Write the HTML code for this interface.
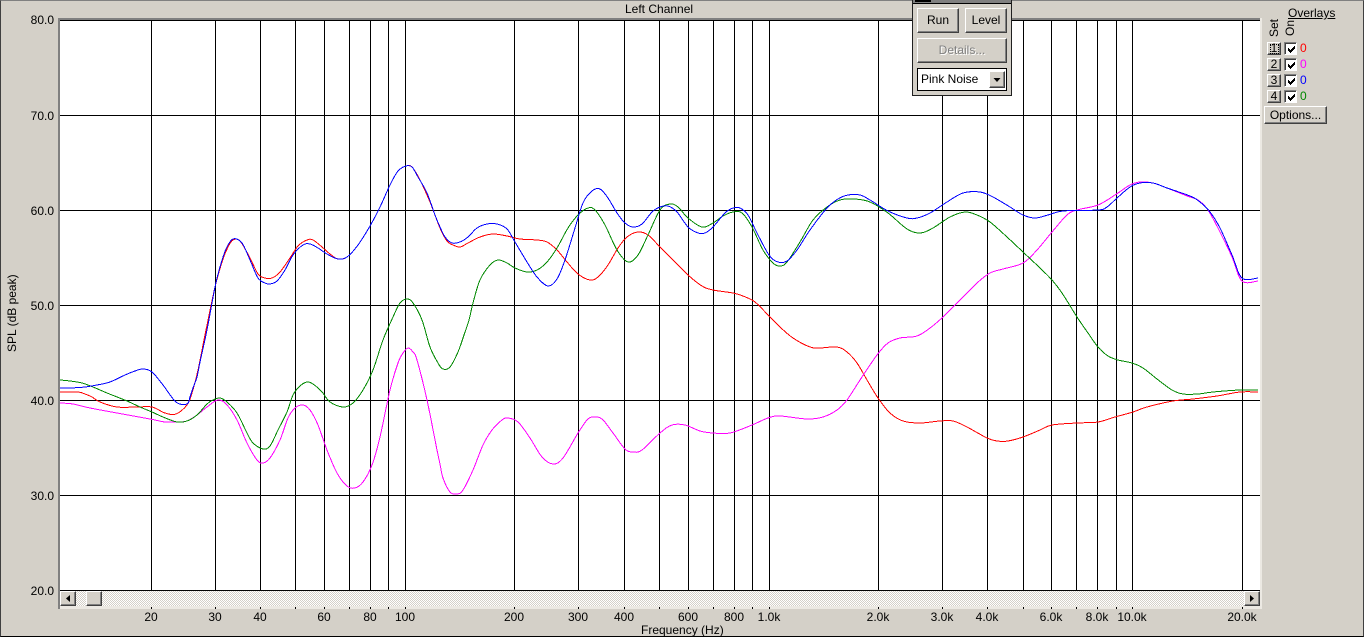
<!DOCTYPE html>
<html><head><meta charset="utf-8"><title>Left Channel</title>
<style>
html,body{margin:0;padding:0}
body{width:1364px;height:637px;position:relative;overflow:hidden;background:#d4d0c8;font:12px/14px "Liberation Sans",Arial,sans-serif;color:#000}
.a{position:absolute;white-space:nowrap}
.yl{position:absolute;right:1310px;white-space:nowrap}
.xl{position:absolute;top:610px;width:60px;margin-left:-30px;text-align:center}
.b{position:absolute;box-sizing:border-box;background:#d4d0c8;border:1px solid;border-color:#fff #404040 #404040 #fff;box-shadow:inset -1px -1px 0 #808080;text-align:center;white-space:nowrap}
.c{position:absolute;box-sizing:border-box;left:1284px;width:13px;height:13px;background:#fff;border:1px solid;border-color:#808080 #fff #fff #808080;box-shadow:inset 1px 1px 0 #404040}
.c svg{position:absolute;left:1px;top:1px}
.z{position:absolute;left:1300px}
</style></head><body>
<div class="a" style="left:0;top:0;width:1362px;height:635px;border:1px solid #404040;border-bottom-color:#000;border-top-color:#808080"></div>
<div class="a" style="left:58px;top:18px;width:1202px;height:2px;background:#808080"></div>
<div class="a" style="left:58px;top:18px;width:2px;height:591px;background:#808080"></div>
<div class="a" style="left:60px;top:20px;width:1200px;height:571px;background:#fff"></div>
<div class="a" style="left:1260px;top:18px;width:2px;height:591px;background:#ece9e3"></div>
<div class="a" style="left:60px;top:606px;width:1202px;height:3px;background:#ece9e3"></div>
<div class="a" style="left:60px;top:591px;width:1200px;height:15px;background:repeating-conic-gradient(#d4d0c8 0 25%,#fff 0 50%) 0 0/2px 2px"></div>

<svg class="a" style="left:0;top:0" width="1364" height="637" viewBox="0 0 1364 637">
<path shape-rendering="crispEdges" fill="none" stroke="#000" stroke-width="1" d="M60 20.5H1260M60 115.5H1260M60 210.5H1260M60 305.5H1260M60 400.5H1260M60 495.5H1260M60 590.5H1260
M151.5 20V590M215.5 20V590M260.5 20V590M295.5 20V590M324.5 20V590M349.5 20V590M370.5 20V590M388.5 20V590M405.5 20V590M514.5 20V590M578.5 20V590M624.5 20V590M659.5 20V590M688.5 20V590M713.5 20V590M734.5 20V590M752.5 20V590M769.5 20V590M878.5 20V590M942.5 20V590M987.5 20V590M1023.5 20V590M1051.5 20V590M1076.5 20V590M1097.5 20V590M1116.5 20V590M1132.5 20V590M1242.5 20V590
M151.5 607V609M215.5 607V609M260.5 607V609M295.5 607V609M324.5 607V609M349.5 607V609M370.5 607V609M388.5 607V609M405.5 607V609M514.5 607V609M578.5 607V609M624.5 607V609M659.5 607V609M688.5 607V609M713.5 607V609M734.5 607V609M752.5 607V609M769.5 607V609M878.5 607V609M942.5 607V609M987.5 607V609M1023.5 607V609M1051.5 607V609M1076.5 607V609M1097.5 607V609M1116.5 607V609M1132.5 607V609M1242.5 607V609"/>
<g id="curves" fill="none" stroke-width="1" shape-rendering="crispEdges" stroke-linejoin="round">
<polyline stroke="#f00" points="60,392 78,392 85,394 92,397 100,402 117,407 137,407 152,407 165,413 176,414 187,405 192,393 198,370 205,335 215,287 222,262 228,247 233,240 240,241 250,258 258,274 265,278 272,278 280,272 290,258 298,246 307,240 313,240 322,247 330,254 338,259 347,257 358,245 370,226 380,207 390,185 398,171 406,166 412,167 420,180 430,202 440,228 447,241 453,245 460,247 468,243 480,237 493,234 507,236 520,239 537,240 547,242 557,250 567,262 578,274 590,280 598,277 608,265 618,248 627,237 638,232 648,235 660,247 673,260 688,275 702,286 713,290 733,293 743,296 755,302 769,316 780,327 793,338 810,347 820,348 837,347 847,352 857,363 867,380 878,398 890,413 903,421 920,423 940,421 953,421 967,427 987,438 997,441 1008,441 1023,437 1040,430 1052,425 1077,423 1098,422 1115,417 1133,412 1147,407 1173,401 1193,399 1217,396 1240,392 1258,392"/>
<polyline stroke="#f0f" points="60,403 73,404 90,408 117,413 150,419 165,422 177,422 187,421 197,415 207,407 218,400 227,405 237,420 247,443 257,460 263,463 270,458 280,440 288,418 295,408 303,405 310,410 318,425 327,450 337,473 347,486 355,488 363,482 372,465 380,437 390,390 398,363 403,353 408,348 413,352 417,360 427,400 437,450 440,464 443,478 450,492 457,494 463,490 473,470 483,445 492,430 502,420 508,418 518,422 530,438 542,457 553,464 563,458 578,433 587,420 593,417 602,419 613,433 625,449 633,452 642,450 660,433 672,425 685,425 700,431 713,433 730,433 752,425 768,418 780,416 807,419 823,417 837,410 847,400 860,380 877,355 888,343 900,338 917,336 930,328 943,317 960,300 977,283 990,273 1003,269 1023,263 1037,250 1052,232 1067,215 1077,210 1098,205 1115,195 1130,185 1140,182 1153,183 1167,188 1187,196 1198,200 1208,210 1220,232 1232,257 1242,281 1258,281"/>
<polyline stroke="#080" points="60,380 70,381 82,383 93,387 107,393 127,401 140,407 152,412 163,417 177,422 187,421 197,415 207,404 213,400 220,398 227,402 237,413 247,433 253,443 263,449 270,446 278,430 287,412 293,395 300,386 307,382 313,384 322,392 330,402 343,407 353,403 363,390 373,370 383,340 393,317 400,303 407,299 413,303 422,320 430,347 438,363 443,369 450,367 458,352 464,335 469,320 473,303 480,280 490,265 498,260 507,263 515,268 527,272 537,270 547,262 557,248 568,228 578,215 588,208 595,210 605,225 617,250 628,262 638,255 648,235 660,210 670,204 678,207 688,218 702,227 713,223 723,216 733,212 742,213 752,227 763,250 773,263 780,266 787,262 800,242 813,220 827,207 840,200 855,199 870,202 888,213 907,229 920,233 933,228 950,217 965,212 977,215 990,222 1007,237 1023,252 1040,268 1052,280 1062,293 1077,317 1088,333 1098,347 1108,356 1118,360 1132,363 1143,368 1157,379 1172,390 1183,394 1198,394 1213,392 1240,390 1258,390"/>
<polyline stroke="#00f" points="60,388 70,388 85,387 97,385 110,382 125,375 135,371 143,369 152,372 163,385 176,402 187,404 190,397 193,388 197,377 200,362 207,330 215,287 220,267 226,249 233,239 242,243 250,260 258,278 265,283 270,284 277,281 285,270 293,255 303,245 310,244 318,248 327,254 338,259 347,257 358,245 370,226 380,207 390,185 398,171 406,166 412,167 418,177 427,193 435,215 440,227 445,237 452,243 460,242 468,237 477,228 487,224 497,224 507,229 515,242 527,262 537,277 548,286 557,279 565,260 575,228 583,203 592,191 600,189 608,198 617,213 625,223 633,227 642,224 652,212 660,207 668,206 677,212 688,227 698,233 705,233 713,227 725,213 733,208 740,208 748,215 757,233 769,255 778,262 787,261 797,250 810,230 827,208 838,199 848,195 860,195 870,200 888,211 907,218 917,218 930,213 947,202 963,193 980,192 993,197 1010,207 1023,215 1035,218 1048,215 1063,211 1098,210 1107,207 1117,198 1130,187 1140,183 1153,183 1167,188 1190,196 1200,202 1210,212 1220,228 1232,255 1242,278 1258,278"/>
</g>
</svg>

<div class="yl" style="top:13px">80.0</div>
<div class="yl" style="top:109px">70.0</div>
<div class="yl" style="top:204px">60.0</div>
<div class="yl" style="top:299px">50.0</div>
<div class="yl" style="top:394px">40.0</div>
<div class="yl" style="top:489px">30.0</div>
<div class="yl" style="top:584px">20.0</div>
<div class="a" style="left:625px;top:2px">Left Channel</div>
<div class="a" style="left:-24px;top:309px;width:72px;text-align:center;transform:rotate(-90deg)">SPL (dB peak)</div>

<div class="xl" style="left:151px">20</div><div class="xl" style="left:215px">30</div><div class="xl" style="left:260px">40</div><div class="xl" style="left:324px">60</div><div class="xl" style="left:370px">80</div><div class="xl" style="left:405px">100</div><div class="xl" style="left:514px">200</div><div class="xl" style="left:578px">300</div><div class="xl" style="left:624px">400</div><div class="xl" style="left:688px">600</div><div class="xl" style="left:734px">800</div><div class="xl" style="left:769px">1.0k</div><div class="xl" style="left:878px">2.0k</div><div class="xl" style="left:942px">3.0k</div><div class="xl" style="left:987px">4.0k</div><div class="xl" style="left:1051px">6.0k</div><div class="xl" style="left:1097px">8.0k</div><div class="xl" style="left:1132px">10.0k</div><div class="xl" style="left:1242px">20.0k</div>
<div class="a" style="left:641px;top:623px">Frequency (Hz)</div>

<div class="b" style="left:60px;top:591px;width:16px;height:15px"><svg width="14" height="13" style="display:block"><path d="M9 3v7L5 6.500z" fill="#000"/></svg></div>
<div class="b" style="left:86px;top:591px;width:16px;height:15px"></div>
<div class="b" style="left:1244px;top:591px;width:16px;height:15px"><svg width="14" height="13" style="display:block"><path d="M5 3v7L9 6.500z" fill="#000"/></svg></div>

<div class="a" style="left:912px;top:0;width:98px;height:95px;background:#d4d0c8;border:1px solid #202020;border-top:0"></div>
<div class="a" style="left:913px;top:0;width:98px;height:3px;background:#808080"></div>
<div class="a" style="left:915px;top:0;width:16px;height:2px;background:#000"></div>
<div class="a" style="left:913px;top:3px;width:98px;height:1px;background:#000"></div>
<div class="b" style="left:917px;top:8px;width:42px;height:25px;line-height:23px">Run</div>
<div class="b" style="left:965px;top:8px;width:42px;height:25px;line-height:23px">Level</div>
<div class="b" style="left:917px;top:38px;width:90px;height:25px;line-height:23px;color:#808080;text-shadow:1px 1px 0 #fff">Details...</div>
<div class="a" style="left:917px;top:68px;width:88px;height:21px;background:#fff;border:1px solid #000;line-height:21px;text-indent:3px">Pink Noise</div>
<div class="b" style="left:989px;top:71px;width:16px;height:17px"><svg width="14" height="15" style="display:block"><path d="M3.500 6h7L7 10z" fill="#000"/></svg></div>

<div class="a" style="left:1288px;top:6px;text-decoration:underline">Overlays</div>
<div class="a" style="left:1264px;top:22px;width:20px;text-align:right;transform:rotate(-90deg);transform-origin:center">Set</div>
<div class="a" style="left:1280px;top:23px;width:20px;text-align:right;transform:rotate(-90deg);transform-origin:center">On</div>

<div class="b" style="left:1267px;top:42px;width:14px;height:13px;line-height:11px">1<span style="position:absolute;left:2px;top:1px;width:7px;height:8px;border:1px dotted #000"></span></div>
<div class="b" style="left:1267px;top:58px;width:14px;height:13px;line-height:11px">2</div>
<div class="b" style="left:1267px;top:74px;width:14px;height:13px;line-height:11px">3</div>
<div class="b" style="left:1267px;top:90px;width:14px;height:13px;line-height:11px">4</div>

<div class="c" style="top:42px"><svg width="11" height="11"><path shape-rendering="crispEdges" d="M2 4h1v1h1v1h1V5h1V4h1V3h1V2h1v3H8v1H7v1H6v1H5v1H4V8H3V7H2z" fill="#000"/></svg></div>
<div class="c" style="top:58px"><svg width="11" height="11"><path shape-rendering="crispEdges" d="M2 4h1v1h1v1h1V5h1V4h1V3h1V2h1v3H8v1H7v1H6v1H5v1H4V8H3V7H2z" fill="#000"/></svg></div>
<div class="c" style="top:74px"><svg width="11" height="11"><path shape-rendering="crispEdges" d="M2 4h1v1h1v1h1V5h1V4h1V3h1V2h1v3H8v1H7v1H6v1H5v1H4V8H3V7H2z" fill="#000"/></svg></div>
<div class="c" style="top:90px"><svg width="11" height="11"><path shape-rendering="crispEdges" d="M2 4h1v1h1v1h1V5h1V4h1V3h1V2h1v3H8v1H7v1H6v1H5v1H4V8H3V7H2z" fill="#000"/></svg></div>
<div class="z" style="top:41px;color:#f00">0</div>
<div class="z" style="top:57px;color:#f0f">0</div>
<div class="z" style="top:73px;color:#00f">0</div>
<div class="z" style="top:89px;color:#080">0</div>
<div class="b" style="left:1264px;top:106px;width:63px;height:18px;line-height:16px">Options...</div>
<script>
(function(){
var g=document.getElementById('curves'),ns='http://www.w3.org/2000/svg';
Array.prototype.slice.call(g.querySelectorAll('polyline')).forEach(function(l){
var p=l.getAttribute('points').trim().split(/\s+/).map(function(s){return s.split(',').map(Number)});
var d='M'+p[0][0]+' '+p[0][1];
for(var i=0;i<p.length-1;i++){
var a=p[Math.max(i-1,0)],b=p[i],c=p[i+1],e=p[Math.min(i+2,p.length-1)];
d+='C'+(b[0]+(c[0]-a[0])/6).toFixed(2)+' '+(b[1]+(c[1]-a[1])/6).toFixed(2)+' '+(c[0]-(e[0]-b[0])/6).toFixed(2)+' '+(c[1]-(e[1]-b[1])/6).toFixed(2)+' '+c[0]+' '+c[1];
}
var n=document.createElementNS(ns,'path');
n.setAttribute('d',d);n.setAttribute('stroke',l.getAttribute('stroke'));
g.replaceChild(n,l);
});
})();
</script>
</body></html>
